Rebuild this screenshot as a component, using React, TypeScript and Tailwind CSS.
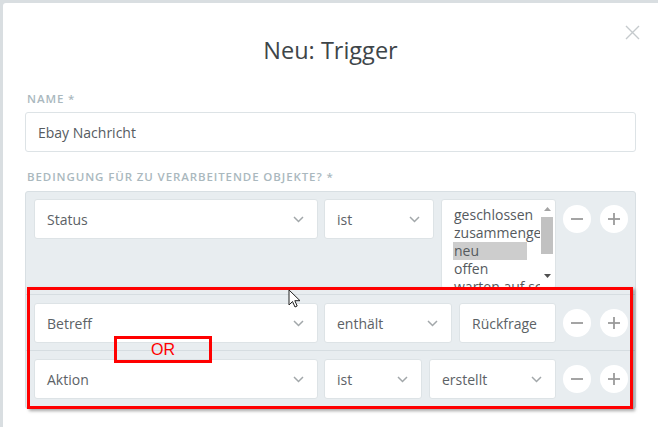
import React from 'react';

const font = { fontFamily: '"Open Sans", "Noto Sans", sans-serif' };

function Chevron() {
  return (
    <svg width="11" height="7" viewBox="0 0 11 7" className="shrink-0">
      <path d="M1 1l4.5 4.5L10 1" fill="none" stroke="#a2a7aa" strokeWidth="1.5" />
    </svg>
  );
}

function Select({ label, w }: { label: string; w: string }) {
  return (
    <div className={`${w} h-10 shrink-0 flex items-center justify-between pl-3 pr-[13px] bg-white border border-[#dde3e6] rounded-[3px] text-[14px] text-[#5c6266]`}>
      <span>{label}</span>
      <Chevron />
    </div>
  );
}

function RoundBtn({ plus }: { plus?: boolean }) {
  return (
    <div className="w-7 h-7 shrink-0 rounded-full bg-white flex items-center justify-center">
      <svg width="12" height="12" viewBox="0 0 12 12">
        <path d="M0 6h12" stroke="#9a9a9a" strokeWidth="1.8" />
        {plus && <path d="M6 0v12" stroke="#9a9a9a" strokeWidth="1.8" />}
      </svg>
    </div>
  );
}

function Buttons() {
  return (
    <div className="flex items-center gap-[9px] ml-[7px] h-10">
      <RoundBtn />
      <RoundBtn plus />
    </div>
  );
}

function Listbox() {
  const items = ['geschlossen', 'zusammengefasst', 'neu', 'offen', 'warten auf schließen'];
  return (
    <div className="w-[115px] h-[90px] shrink-0 ml-[7px] bg-white border border-[#dde3e6] rounded-[3px] relative overflow-hidden flex">
      <div className="flex-1 pt-[6px] pl-[11px] overflow-hidden text-[14px] leading-[18px] text-[#555a5e]">
        {items.map((it) => (
          <div key={it} className={`w-[74px] whitespace-nowrap pl-[1px] ${it === 'neu' ? 'bg-[#cdcdcd]' : ''}`}>
            {it}
          </div>
        ))}
      </div>
      <div className="w-[14px] shrink-0 mr-[1px] flex flex-col items-center pt-[7px]">
        <svg width="7" height="4" viewBox="0 0 7 4"><path d="M0 4L3.5 0L7 4z" fill="#a3a3a3" /></svg>
        <div className="w-[12px] h-[37px] bg-[#c1c1c1] mt-[6px]" />
        <svg width="7" height="4" viewBox="0 0 7 4" className="mt-[20px]"><path d="M0 0L3.5 4L7 0z" fill="#505050" /></svg>
      </div>
    </div>
  );
}

function Cursor() {
  return (
    <svg className="absolute left-[288px] top-[289px]" width="14" height="19" viewBox="0 0 14 19">
      <path d="M1 1v15l3.5-3.5 2.5 5.5 2.2-1-2.4-5.3H12z" fill="#fff" stroke="#222" strokeWidth="1" strokeLinejoin="round" />
    </svg>
  );
}

export default function App() {
  return (
    <div className="w-[658px] h-[427px] bg-[#d9dee1] pt-[3px] pl-[3px] overflow-hidden relative" style={font}>
      <div className="w-[655px] h-[424px] bg-white rounded-tl-[3px] px-[22px]">
        <div className="relative h-[88px] flex justify-center pt-[31px]">
          <h1 className="text-[23.5px] leading-8 text-[#3e4549]">Neu: Trigger</h1>
          <svg className="absolute right-[-4px] top-[22px]" width="15" height="15" viewBox="0 0 15 15">
            <path d="M1 1l13 13M14 1L1 14" stroke="#c5cacd" strokeWidth="1.4" />
          </svg>
        </div>
        <div className="text-[11.5px] leading-4 tracking-[0.9px] font-semibold text-[#aab8be] pl-[2px] mb-[5px]">NAME *</div>
        <div className="h-10 border border-[#dde3e6] rounded-[3px] flex items-center pl-3 text-[14px] text-[#565b5f]">
          Ebay Nachricht
        </div>
        <div className="text-[11.5px] leading-4 tracking-[0.9px] font-semibold text-[#aab8be] pl-[2px] mt-[17px] mb-[6px]">
          BEDINGUNG FÜR ZU VERARBEITENDE OBJEKTE? *
        </div>
        <div className="bg-[#e8edf0] border border-[#d8dfe3] rounded-[3px] h-[218px]">
          <div className="flex px-2 pt-[7px] h-[103px] border-b border-[#d6dde1]">
            <Select label="Status" w="w-[284px]" />
            <div className="ml-[6px]"><Select label="ist" w="w-[110px]" /></div>
            <Listbox />
            <Buttons />
          </div>
          <div className="flex px-2 pt-2 h-[56px] border-b border-[#d6dde1]">
            <Select label="Betreff" w="w-[284px]" />
            <div className="ml-[6px]"><Select label="enthält" w="w-[128px]" /></div>
            <div className="w-[97px] h-10 shrink-0 ml-[7px] bg-white border border-[#dde3e6] rounded-[3px] flex items-center pl-[12px] text-[14px] text-[#5c6266]">
              Rückfrage
            </div>
            <Buttons />
          </div>
          <div className="flex px-2 pt-2">
            <Select label="Aktion" w="w-[284px]" />
            <div className="ml-[6px]"><Select label="ist" w="w-[98px]" /></div>
            <div className="ml-[7px]"><Select label="erstellt" w="w-[127px]" /></div>
            <Buttons />
          </div>
        </div>
      </div>

      {/* annotation overlays */}
      <div className="absolute left-[27px] top-[287px] w-[606px] h-[122px] border-[3px] border-[#ff0000] shadow-[2px_2px_3px_rgba(0,0,0,0.35)]" />
      <div
        className="absolute left-[114px] top-[336px] w-[98px] h-[27px] border-[3px] border-[#ff0000] flex items-center justify-center text-[16px] text-[#ff0000] leading-none"
        style={{ fontFamily: '"Liberation Sans", Arial, sans-serif' }}
      >
        OR
      </div>
      <Cursor />
    </div>
  );
}
